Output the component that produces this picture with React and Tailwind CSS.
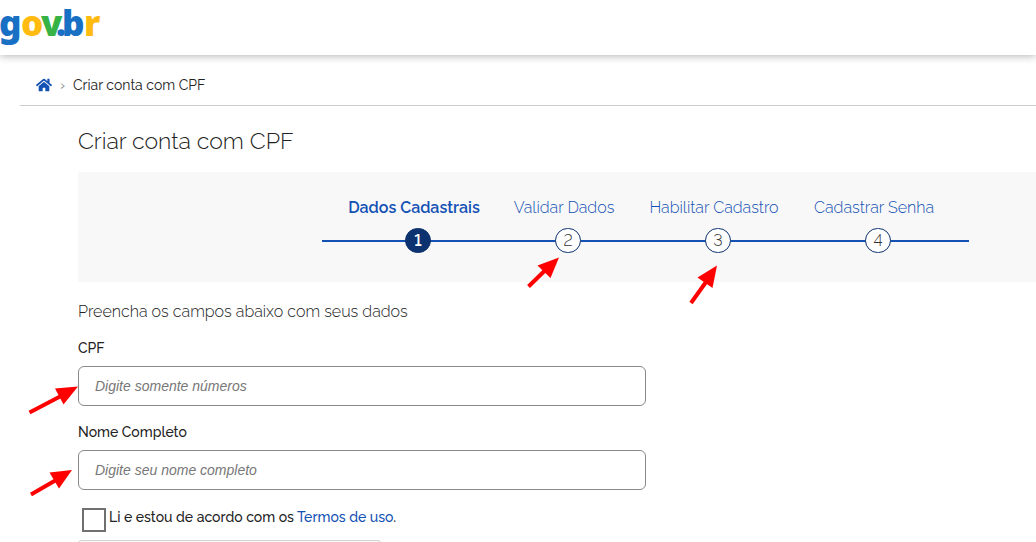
import React, { useState } from 'react';
import { FaHome } from 'react-icons/fa';

const steps = [
  { number: 1, label: 'Dados Cadastrais' },
  { number: 2, label: 'Validar Dados' },
  { number: 3, label: 'Habilitar Cadastro' },
  { number: 4, label: 'Cadastrar Senha' },
];

const Logo = () => (
  <svg viewBox="0 0 112 52" className="block w-28 h-[52px]" role="img" aria-label="gov.br">
    <text y="36" className="font-['Noto_Sans',sans-serif] text-[35px] font-black">
      <tspan x="-1" fill="#1870c5">g</tspan>
      <tspan x="21" fill="#ffbb10">o</tspan>
      <tspan x="41" fill="#37b345">v</tspan>
      <tspan x="56" fill="#1870c5">.</tspan>
      <tspan x="62" fill="#1870c5">b</tspan>
      <tspan x="84" fill="#ffbb10">r</tspan>
    </text>
  </svg>
);

const Header = () => (
  <header className="bg-white h-[55px] shadow-[0_1px_8px_rgba(0,0,0,0.3)]">
    <a href="#inicio" className="inline-block">
      <Logo />
    </a>
  </header>
);

const Breadcrumb = () => (
  <nav aria-label="Trilha" className="ml-5 pl-4 h-[51px] pt-2.5 flex items-center text-sm border-b border-[#ccc]">
    <a href="#inicio" aria-label="Início" className="text-[#1351b4]">
      <FaHome className="w-4 h-4" />
    </a>
    <span className="w-[21px] text-center text-[#888]">›</span>
    <span>Criar conta com CPF</span>
  </nav>
);

const Stepper = ({ current, onChange }) => (
  <div className="bg-[#f8f8f8] h-[110px] pl-61 pt-6">
    <div className="relative w-[647px] pl-[21px] pr-1.5">
      <div className="absolute left-0 right-0 top-[44px] h-0.5 bg-[#1351b4]" />
      <ol className="relative grid grid-cols-[150fr_150fr_150fr_170fr]">
        {steps.map((step) => {
          const active = step.number === current;
          return (
            <li key={step.number}>
              <button
                type="button"
                onClick={() => onChange(step.number)}
                className={`w-full flex flex-col items-center gap-2 text-base leading-6 whitespace-nowrap text-[#1351b4] ${active ? 'font-semibold' : 'font-light'}`}
              >
                <span className="pr-2">{step.label}</span>
                <span
                  className={`w-[26px] h-[25px] rounded-full border border-[#0c326f] flex items-center justify-center lining-nums ${active ? 'bg-[#0c326f] text-white' : 'bg-white text-[#333]'}`}
                >
                  {step.number}
                </span>
              </button>
            </li>
          );
        })}
      </ol>
    </div>
  </div>
);

const Field = ({ id, label, placeholder }) => (
  <div className="flex flex-col">
    <label htmlFor={id} className="text-sm leading-6 font-medium mb-1.5">{label}</label>
    <input
      id={id}
      type="text"
      placeholder={placeholder}
      className="h-10 w-full px-4 border border-[#888] rounded-md bg-white font-['Liberation_Sans',sans-serif] text-sm placeholder:italic placeholder:text-[#777] focus:outline-none focus:border-[#1351b4]"
    />
  </div>
);

const Arrows = () => (
  <svg className="absolute left-0 top-0 w-[1036px] h-[542px] pointer-events-none" viewBox="0 0 1036 542" aria-hidden="true">
    <g stroke="#f00" strokeWidth="4">
      <path d="M528.500 286.500L546 269.500" />
      <path d="M691 303L706 282" />
      <path d="M29.500 412.500L62 395.500" />
      <path d="M31 494.500L57 479.500" />
    </g>
    <g fill="#f00">
      <path d="M559 257.500L550.500 278L537.500 265.500Z" />
      <path d="M717 265.500L712.500 288L697.500 277.500Z" />
      <path d="M78 386.500L63.500 404.500L55 388.500Z" />
      <path d="M72 470L59 488.500L49.500 472.500Z" />
    </g>
  </svg>
);

export default function App() {
  const [current, setCurrent] = useState(1);
  const [accepted, setAccepted] = useState(false);

  return (
    <div className="relative h-screen overflow-hidden bg-white text-[#222] font-['Raleway','Open_Sans',sans-serif]">
      <Header />
      <Breadcrumb />
      <main className="ml-[78px] pt-[19px]">
        <h1 className="text-[23px] leading-8 font-light mb-[15px]">Criar conta com CPF</h1>
        <Stepper current={current} onChange={setCurrent} />
        <form className="w-full max-w-[568px]">
          <p className="text-base leading-6 font-light mt-[18px] mb-3">Preencha os campos abaixo com seus dados</p>
          <div className="flex flex-col gap-3.5">
            <Field id="cpf" label="CPF" placeholder="Digite somente números" />
            <Field id="nome" label="Nome Completo" placeholder="Digite seu nome completo" />
          </div>
          <div className="flex items-start gap-[3px] mt-[18px] ml-1 text-sm leading-[18px] font-medium">
            <input
              id="termos"
              type="checkbox"
              checked={accepted}
              onChange={(e) => setAccepted(e.target.checked)}
              className="appearance-none w-6 h-6 border-2 border-[#707070] bg-white checked:bg-[#1351b4]"
            />
            <label htmlFor="termos">
              Li e estou de acordo com os <a href="#termos-de-uso" className="text-[#1351b4]">Termos de uso</a>.
            </label>
          </div>
          <div className="mt-2 w-[303px] h-20 border border-[#d3d3d3] rounded-[3px] bg-[#f9f9f9]" />
        </form>
      </main>
      <Arrows />
    </div>
  );
}
